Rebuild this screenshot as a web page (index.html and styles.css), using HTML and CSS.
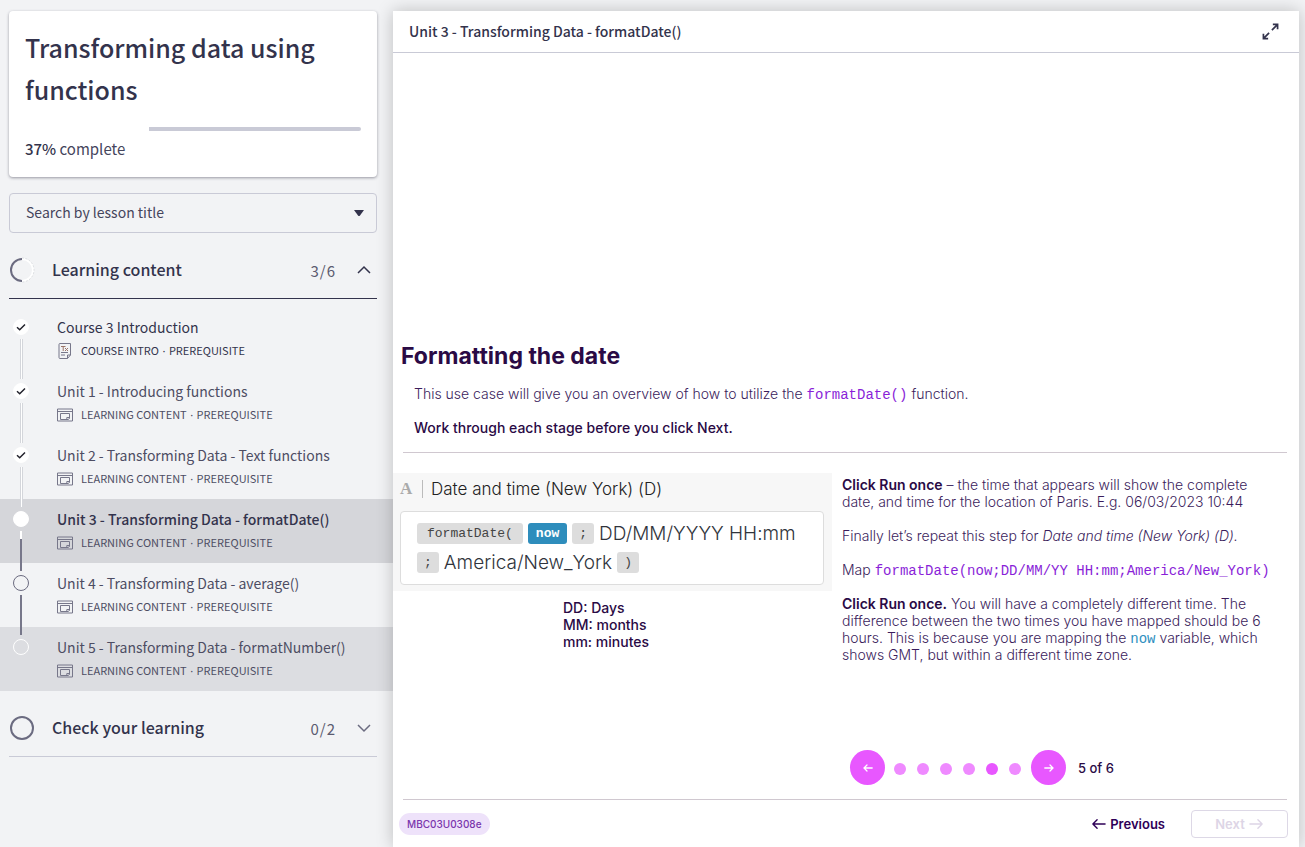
FILE: index.html
```html
<!DOCTYPE html>
<html lang="en">
<head>
<meta charset="utf-8">
<title>Transforming data using functions</title>
<link rel="stylesheet" href="styles.css">
</head>
<body>
<svg class="sprite" aria-hidden="true">
  <symbol id="lesson" viewBox="0 0 16 14"><path d="M.5 1h15v12H.5zM.5 3.500h15M3.500 5.500h9v5l-1.500 1h-7.500zM12.500 9.500H9.800v1.800" fill="none" stroke="currentColor"/></symbol>
  <symbol id="doc" viewBox="0 0 16 16"><path d="M3 .5h10.500v11.500L10.500 15.500H3q-1 0-1-1V1.500q0-1 1-1zM13.500 12H10.500v3.500M4 9.500h7M4 12h4" fill="none" stroke="currentColor"/><path d="M4 3.500h4.500M6.200 3.500v4.500M8 5l3 3M11 5L8 8" fill="none" stroke="#9a7468"/></symbol>
  <symbol id="tick" viewBox="0 0 16 16"><path d="M4 8.300l2.700 2.400L12 5.500" fill="none" stroke="currentColor" stroke-width="1.500"/></symbol>
  <symbol id="left" viewBox="0 0 16 12"><path d="M15 6H2M6.500 1.500L2 6l4.500 4.500" fill="none" stroke="currentColor" stroke-width="1.500" stroke-linecap="round" stroke-linejoin="round"/></symbol>
  <symbol id="right" viewBox="0 0 16 12"><path d="M1 6h13M9.500 1.500L14 6l-4.500 4.500" fill="none" stroke="currentColor" stroke-width="1.500" stroke-linecap="round" stroke-linejoin="round"/></symbol>
  <symbol id="sleft" viewBox="0 0 10 10"><path d="M9.200 5H1M4 2L1 5l3 3" fill="none" stroke="currentColor" stroke-width="1.300" stroke-linecap="round"/></symbol>
  <symbol id="sright" viewBox="0 0 10 10"><path d="M.8 5H9M6 2l3 3-3 3" fill="none" stroke="currentColor" stroke-width="1.300" stroke-linecap="round"/></symbol>
</svg>
<div class="page">
  <aside class="sidebar">
    <section class="card">
      <h1 class="course">Transforming data using functions</h1>
      <div class="bar"><div class="bar-rest" style="width:63%"></div></div>
      <p class="complete"><strong>37%</strong> complete</p>
    </section>
    <div class="search">
      <select class="search-select" aria-label="Search by lesson title"><option>Search by lesson title</option></select>
      <svg class="caret" viewBox="0 0 10 6"><path d="M0 0h10L6 5.500q-1 1-2 0z" fill="#33334c"/></svg>
    </div>
    <button class="section section-open">
      <svg class="ring" viewBox="0 0 26 26" fill="none"><circle cx="13" cy="13" r="11" stroke="#fff" stroke-width="2"/><path d="M13 1a12 12 0 0 1 0 24" stroke="#cfd1d6" stroke-width=".7" stroke-dasharray="2 1.500"/><path d="M13 2a11 11 0 0 0 0 22" stroke="#6b6b80" stroke-width="2"/></svg>
      <span class="section-name">Learning content</span><span class="count">3/6</span>
      <svg class="chevron" viewBox="0 0 14 14"><path d="M1 10l6-6 6 6" fill="none" stroke="#33334c" stroke-width="1.500"/></svg>
    </button>
    <ul class="lessons">
      <li class="lesson done"><span class="track"><span class="dot"><svg class="tick"><use href="#tick"/></svg></span><span class="line"></span></span><a class="link dark" href="#"><span class="name">Course 3 Introduction</span><span class="meta"><svg class="doc"><use href="#doc"/></svg><span>COURSE INTRO <span class="sep">·</span> PREREQUISITE</span></span></a></li>
      <li class="lesson done"><span class="track"><span class="dot"><svg class="tick"><use href="#tick"/></svg></span><span class="line"></span></span><a class="link" href="#"><span class="name">Unit 1 - Introducing functions</span><span class="meta"><svg class="kind"><use href="#lesson"/></svg><span>LEARNING CONTENT <span class="sep">·</span> PREREQUISITE</span></span></a></li>
      <li class="lesson done"><span class="track"><span class="dot"><svg class="tick"><use href="#tick"/></svg></span><span class="line"></span></span><a class="link" href="#"><span class="name">Unit 2 - Transforming Data - Text functions</span><span class="meta"><svg class="kind"><use href="#lesson"/></svg><span>LEARNING CONTENT <span class="sep">·</span> PREREQUISITE</span></span></a></li>
      <li class="lesson current"><span class="track"><span class="dot"></span><span class="line"></span></span><a class="link" href="#" aria-current="page"><span class="name">Unit 3 - Transforming Data - formatDate()</span><span class="meta"><svg class="kind"><use href="#lesson"/></svg><span>LEARNING CONTENT <span class="sep">·</span> PREREQUISITE</span></span></a></li>
      <li class="lesson todo"><span class="track"><span class="dot"></span><span class="line"></span></span><a class="link" href="#"><span class="name">Unit 4 - Transforming Data - average()</span><span class="meta"><svg class="kind"><use href="#lesson"/></svg><span>LEARNING CONTENT <span class="sep">·</span> PREREQUISITE</span></span></a></li>
      <li class="lesson hovered"><span class="track"><span class="dot"></span></span><a class="link" href="#"><span class="name">Unit 5 - Transforming Data - formatNumber()</span><span class="meta"><svg class="kind"><use href="#lesson"/></svg><span>LEARNING CONTENT <span class="sep">·</span> PREREQUISITE</span></span></a></li>
    </ul>
    <button class="section">
      <svg class="ring" viewBox="0 0 26 26" fill="none"><circle cx="13" cy="13" r="11" stroke="#6b6b80" stroke-width="2"/></svg>
      <span class="section-name">Check your learning</span><span class="count">0/2</span>
      <svg class="chevron" viewBox="0 0 14 14"><path d="M1 4l6 6 6-6" fill="none" stroke="#6b6b80" stroke-width="1.500"/></svg>
    </button>
  </aside>
  <main class="viewer">
    <header class="topbar">
      <h2 class="unit">Unit 3 - Transforming Data - formatDate()</h2>
      <button class="expand" aria-label="Expand"><svg class="expand-icon" viewBox="0 0 18 18"><path d="M10.500 7.500L16 2M11.500 1.500h5v5M7.500 10.500L2 16M1.500 11.500v5h5" fill="none" stroke="#33334c" stroke-width="1.800"/></svg></button>
    </header>
    <article class="slide">
      <h3 class="heading">Formatting the date</h3>
      <p class="intro">This use case will give you an overview of how to utilize the <code class="code">formatDate()</code> function.</p>
      <p class="intro strong">Work through each stage before you click Next.</p>
      <hr class="rule">
      <div class="columns">
        <div class="left">
          <div class="mapper">
            <div class="field"><span class="type">A</span><span class="field-name">Date and time (New York) (D)</span></div>
            <div class="formula">
              <div class="row"><span class="pill wide">formatDate(</span><span class="pill blue">now</span><span class="pill">;</span><span>DD/MM/YYYY HH:mm</span></div>
              <div class="row"><span class="pill">;</span><span>America/New_York</span><span class="pill">)</span></div>
            </div>
          </div>
          <p class="legend">DD: Days<br>MM: months<br>mm: minutes</p>
        </div>
        <div class="right">
          <p class="para"><b>Click Run once</b> – the time that appears will show the complete date, and time for the location of Paris. E.g. 06/03/2023 10:44</p>
          <p class="para">Finally let’s repeat this step for <i>Date and time (New York) (D).</i></p>
          <p class="para map">Map <code class="code">formatDate(now;DD/MM/YY HH:mm;America/New_York)</code></p>
          <p class="para"><b>Click Run once.</b> You will have a completely different time. The difference between the two times you have mapped should be 6 hours. This is because you are mapping the <code class="now">now</code> variable, which shows GMT, but within a different time zone.</p>
        </div>
      </div>
      <nav class="pager" aria-label="Stages">
        <button class="round" aria-label="Previous stage"><svg class="small"><use href="#sleft"/></svg></button>
        <span class="dots"><span class="step"></span><span class="step"></span><span class="step"></span><span class="step"></span><span class="step on"></span><span class="step"></span></span>
        <button class="round" aria-label="Next stage"><svg class="small"><use href="#sright"/></svg></button>
        <span class="of">5 of 6</span>
      </nav>
      <hr class="rule rule-end">
      <footer class="footer">
        <span class="tag">MBC03U0308e</span>
        <button class="prev"><svg class="arrow"><use href="#left"/></svg>Previous</button>
        <button class="next" disabled>Next<svg class="arrow"><use href="#right"/></svg></button>
      </footer>
    </article>
  </main>
</div>
</body>
</html>
```
FILE: styles.css
```css
* { box-sizing: border-box; }
body { margin: 0; background: #f2f3f5; color: #33334c; font-family: "Noto Sans CJK SC", "Noto Sans", sans-serif; font-size: 14px; }
h1, h2, h3, p, ul { margin: 0; padding: 0; }
button { font: inherit; color: inherit; background: none; border: 0; padding: 0; }
.sprite { display: none; }
.page { display: grid; grid-template-columns: 393px minmax(0, 1fr); min-height: 100vh; overflow: hidden; }

.sidebar { padding-top: 11px; }
.card { margin: 0 16px 16px 9px; padding: 15px 16px 16px; background: #fff; border-radius: 4px; box-shadow: 0 1px 3px rgba(40, 40, 60, .45); }
.course { font-size: 25px; line-height: 42px; font-weight: 500; }
.bar { display: flex; justify-content: flex-end; margin-top: 17px; }
.bar-rest { height: 4px; background: #c9cad6; border-radius: 0 2px 2px 0; }
.complete { margin-top: 6px; line-height: 24px; font-size: 15px; color: #45455c; }
.complete strong { font-weight: 500; color: #33334c; }
.search { display: flex; align-items: center; position: relative; margin: 0 16px 16px 9px; }
.search-select { appearance: none; width: 100%; height: 40px; padding: 0 16px 2px; border: 1px solid #c9cad6; border-radius: 4px; background: transparent; color: #45455c; font: inherit; }
.caret { position: absolute; right: 13px; width: 10px; height: 6px; pointer-events: none; }
.section { display: flex; align-items: center; width: calc(100% - 25px); height: 50px; margin-left: 9px; padding: 0 6px 7px 0; border-bottom: 1px solid #c9cad6; text-align: left; }
.section-open { border-color: #33334c; }
.ring { width: 26px; height: 26px; margin-right: 17px; }
.section-name { flex: 1; padding-bottom: 2px; font-size: 16px; font-weight: 500; }
.count { margin-right: 21px; color: #5b5b70; font-size: 15px; letter-spacing: 1px; }
.chevron { width: 14px; height: 14px; }

.lessons { list-style: none; margin: 8px 0 16px; }
.lesson { display: flex; height: 64px; color: #5b5b70; }
.track { display: flex; flex-direction: column; align-items: center; width: 16px; margin-left: 13px; margin-top: 12px; gap: 4px; }
.dot { display: flex; align-items: center; justify-content: center; flex: none; width: 16px; height: 16px; border-radius: 50%; border: 1px solid #6b6b80; color: #22222c; }
.done .dot, .current .dot { background: #fff; border-color: #fff; }
.hovered .dot { border-color: #fff; }
.tick { flex: none; width: 16px; height: 16px; }
.line { flex: none; width: 2px; height: 40px; background: #77778a; z-index: 1; }
.done .line { width: 3px; background: #fff; border: solid #d4d6db; border-width: 0 1px; }
.current .line { background: linear-gradient(#fff 8px, #77778a 8px); }
.current { background: #d5d6da; }
.hovered { background: #dcdde1; }
.link { margin-left: 28px; padding-top: 8px; color: #4d4d63; text-decoration: none; }
.dark { color: #33334c; }
.name { display: block; line-height: 25px; }
.current .name { font-weight: 500; color: #33334c; }
.meta { display: flex; align-items: center; gap: 8px; line-height: 20px; font-size: 11px; }
.sep { font-family: "Noto Sans", sans-serif; padding: 0 1px; }
.kind, .doc { width: 16px; height: 14px; color: #77778a; }
.doc { height: 16px; }

.viewer { display: flex; flex-direction: column; margin: 11px 6px 0 0; background: #fff; box-shadow: 0 0 16px rgba(0, 0, 0, .22); }
.topbar { display: flex; align-items: center; justify-content: space-between; height: 42px; padding: 0 20px 0 16px; border-bottom: 1px solid #c9cad6; }
.unit { padding-bottom: 2px; font-size: 14px; line-height: 20px; font-weight: 500; }
.expand { display: flex; }
.expand-icon { width: 17px; height: 17px; }

.slide { display: flex; flex-direction: column; flex: 1; font-family: Inter, sans-serif; font-size: 14px; font-weight: 300; color: #3b1d5c; }
.heading { margin: auto 8px 0; padding-top: 32px; font-size: 23px; line-height: 32px; font-weight: 700; color: #2a0a45; }
.intro { margin: 13px 21px 0; line-height: 18px; }
.strong { margin-top: 16px; font-weight: 500; color: #2a0a45; }
.code, .now { font-family: "Liberation Mono", monospace; font-size: 14px; line-height: 14px; color: #8a1fd8; }
.now { color: #2e8fc0; }
.rule { flex: none; height: 1px; margin: 15px 12px 20px 10px; border: 0; background: #d0c8d0; }
.rule-end { margin: 0 12px 10px 10px; }
.columns { display: grid; grid-template-columns: minmax(0, 439fr) minmax(0, 467fr); }
.mapper { padding: 4px 8px 6px 7px; background: #f7f7f7; }
.field { display: flex; align-items: center; height: 24px; color: #222; font-size: 17px; }
.type { width: 23px; border-right: 1px solid #bbb; font-family: "Liberation Serif", serif; font-weight: 700; color: #aaa; line-height: 18px; }
.field-name { padding-left: 8px; }
.formula { margin-top: 10px; padding: 7px 16px; background: #fff; border: 1px solid #ddd; border-radius: 4px; font-size: 19px; color: #30343c; }
.row { display: flex; align-items: center; gap: 5px; height: 29px; white-space: nowrap; }
.pill { padding: 0 7px; border-radius: 3px; background: #ddd; color: #444; font-family: "Liberation Mono", monospace; font-size: 13px; line-height: 21px; }
.wide { padding: 0 10px; }
.blue { padding: 0 8px; background: #2e8dbc; color: #fff; font-weight: 700; }
.legend { margin: 8px 0 0 170px; line-height: 17px; font-weight: 500; color: #2a0a45; }
.right { padding: 3px 20px 0 10px; }
.para { margin-bottom: 17px; line-height: 17px; }
.map { white-space: nowrap; }
.para b { font-weight: 600; color: #2a0a45; }
.pager { display: flex; align-items: center; margin: 70px 0 14px 457px; font-size: 13px; font-weight: 500; }
.round { display: flex; align-items: center; justify-content: center; width: 35px; height: 35px; border-radius: 50%; background: #e857ff; color: #fff; }
.small { width: 10px; height: 10px; }
.dots { display: flex; gap: 11px; padding: 3px 10px 0 9px; }
.step { width: 12px; height: 12px; border-radius: 50%; background: #ef8aff; }
.on { background: #e857ff; }
.of { margin-left: 12px; color: #2a0a45; }
.footer { display: flex; align-items: center; margin: 0 11px 9px 6px; font-size: 13px; font-weight: 600; }
.tag { margin-right: auto; padding: 0 8px; border-radius: 11px; background: #eee2fa; color: #7a35ad; font-size: 10px; line-height: 22px; font-weight: 500; }
.prev, .next { display: flex; align-items: center; gap: 4px; }
.prev { margin-right: 26px; color: #2e0057; }
.next { justify-content: center; width: 97px; height: 28px; border: 1px solid #ddd8e6; border-radius: 4px; color: #ddd5e6; }
.arrow { width: 15px; height: 12px; }
```
